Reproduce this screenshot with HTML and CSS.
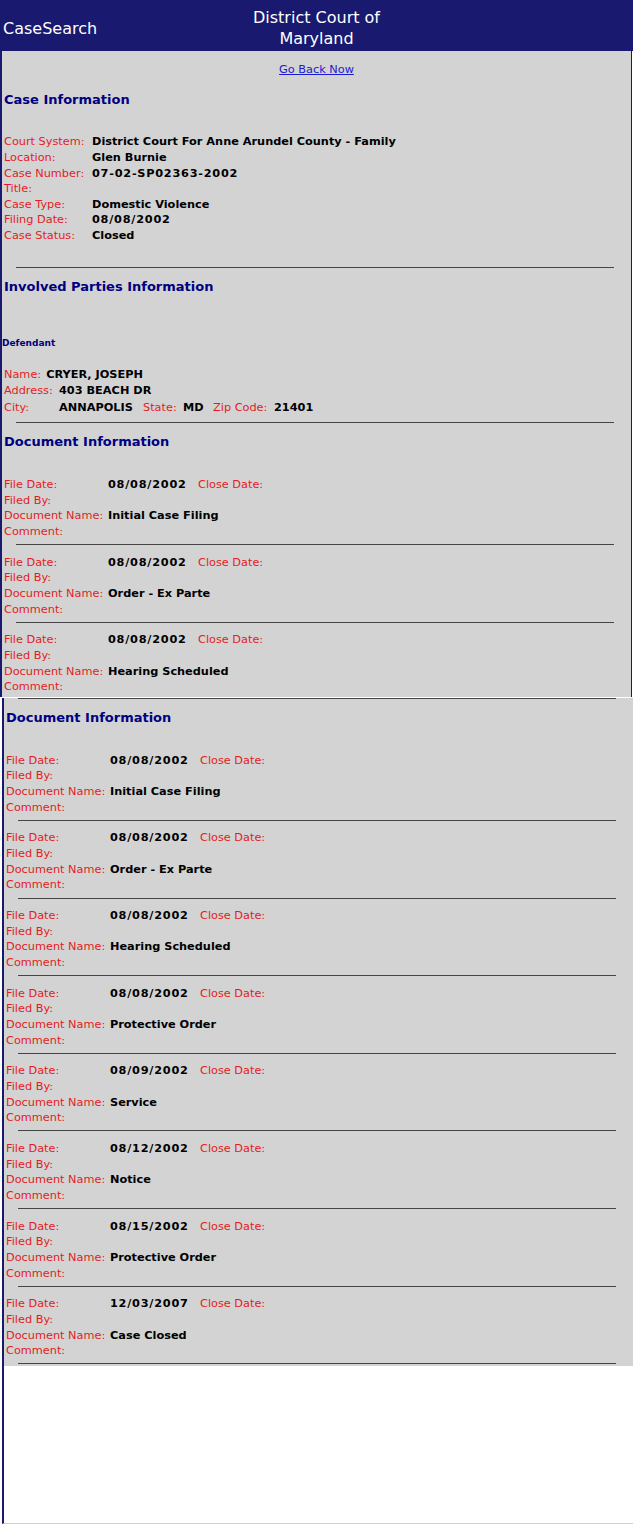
FILE: index.html
```html
<!DOCTYPE html>
<html lang="en">
<head>
<meta charset="utf-8">
<title>CaseSearch - District Court of Maryland</title>
<link rel="stylesheet" href="styles.css">
</head>
<body>
<header class="topbar">
  <div class="brand">CaseSearch</div>
  <div class="court">District Court of<br>Maryland</div>
  <div></div>
</header>

<main class="panel-top">
  <div class="goback"><a href="#">Go Back Now</a></div>

  <h2 class="section-title">Case Information</h2>
  <dl class="case-grid">
    <dt class="lbl">Court System:</dt><dd class="val">District Court For Anne Arundel County - Family</dd>
    <dt class="lbl">Location:</dt><dd class="val">Glen Burnie</dd>
    <dt class="lbl">Case Number:</dt><dd class="val num">07-02-SP02363-2002</dd>
    <dt class="lbl">Title:</dt><dd class="val"></dd>
    <dt class="lbl">Case Type:</dt><dd class="val">Domestic Violence</dd>
    <dt class="lbl">Filing Date:</dt><dd class="val num">08/08/2002</dd>
    <dt class="lbl">Case Status:</dt><dd class="val">Closed</dd>
  </dl>
  <hr class="rule rule-case">

  <h2 class="section-title title-parties">Involved Parties Information</h2>
  <div class="party-role">Defendant</div>
  <div class="party">
    <div class="party-name"><span class="lbl">Name:</span><span class="val">CRYER, JOSEPH</span></div>
    <div class="party-grid">
      <span class="lbl">Address:</span><span class="val">403 BEACH DR</span>
      <span class="lbl">City:</span>
      <div class="city-row">
        <span class="val">ANNAPOLIS</span>
        <span class="lbl">State:</span>
        <span class="val">MD</span>
        <span class="lbl">Zip Code:</span>
        <span class="val">21401</span>
      </div>
    </div>
  </div>
  <hr class="rule rule-party">

  <h2 class="section-title title-docs">Document Information</h2>
  <div class="docs">
    <div class="doc">
      <span class="lbl">File Date:</span><span class="val num">08/08/2002</span><span class="lbl">Close Date:</span>
      <span class="lbl">Filed By:</span><span class="val wide"></span>
      <span class="lbl">Document Name:</span><span class="val wide">Initial Case Filing</span>
      <span class="lbl">Comment:</span><span class="val wide"></span>
    </div>
    <hr class="rule doc-rule">
    <div class="doc">
      <span class="lbl">File Date:</span><span class="val num">08/08/2002</span><span class="lbl">Close Date:</span>
      <span class="lbl">Filed By:</span><span class="val wide"></span>
      <span class="lbl">Document Name:</span><span class="val wide">Order - Ex Parte</span>
      <span class="lbl">Comment:</span><span class="val wide"></span>
    </div>
    <hr class="rule doc-rule">
    <div class="doc">
      <span class="lbl">File Date:</span><span class="val num">08/08/2002</span><span class="lbl">Close Date:</span>
      <span class="lbl">Filed By:</span><span class="val wide"></span>
      <span class="lbl">Document Name:</span><span class="val wide">Hearing Scheduled</span>
      <span class="lbl">Comment:</span><span class="val wide"></span>
    </div>
  </div>
</main>

<section class="panel-bottom">
  <div class="panel-gray">
    <hr class="rule">
    <h2 class="section-title title-docs">Document Information</h2>
    <div class="docs">
      <div class="doc">
        <span class="lbl">File Date:</span><span class="val num">08/08/2002</span><span class="lbl">Close Date:</span>
        <span class="lbl">Filed By:</span><span class="val wide"></span>
        <span class="lbl">Document Name:</span><span class="val wide">Initial Case Filing</span>
        <span class="lbl">Comment:</span><span class="val wide"></span>
      </div>
      <hr class="rule doc-rule">
      <div class="doc">
        <span class="lbl">File Date:</span><span class="val num">08/08/2002</span><span class="lbl">Close Date:</span>
        <span class="lbl">Filed By:</span><span class="val wide"></span>
        <span class="lbl">Document Name:</span><span class="val wide">Order - Ex Parte</span>
        <span class="lbl">Comment:</span><span class="val wide"></span>
      </div>
      <hr class="rule doc-rule">
      <div class="doc">
        <span class="lbl">File Date:</span><span class="val num">08/08/2002</span><span class="lbl">Close Date:</span>
        <span class="lbl">Filed By:</span><span class="val wide"></span>
        <span class="lbl">Document Name:</span><span class="val wide">Hearing Scheduled</span>
        <span class="lbl">Comment:</span><span class="val wide"></span>
      </div>
      <hr class="rule doc-rule">
      <div class="doc">
        <span class="lbl">File Date:</span><span class="val num">08/08/2002</span><span class="lbl">Close Date:</span>
        <span class="lbl">Filed By:</span><span class="val wide"></span>
        <span class="lbl">Document Name:</span><span class="val wide">Protective Order</span>
        <span class="lbl">Comment:</span><span class="val wide"></span>
      </div>
      <hr class="rule doc-rule">
      <div class="doc">
        <span class="lbl">File Date:</span><span class="val num">08/09/2002</span><span class="lbl">Close Date:</span>
        <span class="lbl">Filed By:</span><span class="val wide"></span>
        <span class="lbl">Document Name:</span><span class="val wide">Service</span>
        <span class="lbl">Comment:</span><span class="val wide"></span>
      </div>
      <hr class="rule doc-rule">
      <div class="doc">
        <span class="lbl">File Date:</span><span class="val num">08/12/2002</span><span class="lbl">Close Date:</span>
        <span class="lbl">Filed By:</span><span class="val wide"></span>
        <span class="lbl">Document Name:</span><span class="val wide">Notice</span>
        <span class="lbl">Comment:</span><span class="val wide"></span>
      </div>
      <hr class="rule doc-rule">
      <div class="doc">
        <span class="lbl">File Date:</span><span class="val num">08/15/2002</span><span class="lbl">Close Date:</span>
        <span class="lbl">Filed By:</span><span class="val wide"></span>
        <span class="lbl">Document Name:</span><span class="val wide">Protective Order</span>
        <span class="lbl">Comment:</span><span class="val wide"></span>
      </div>
      <hr class="rule doc-rule">
      <div class="doc">
        <span class="lbl">File Date:</span><span class="val num">12/03/2007</span><span class="lbl">Close Date:</span>
        <span class="lbl">Filed By:</span><span class="val wide"></span>
        <span class="lbl">Document Name:</span><span class="val wide">Case Closed</span>
        <span class="lbl">Comment:</span><span class="val wide"></span>
      </div>
      <hr class="rule doc-rule">
    </div>
  </div>
</section>
</body>
</html>
```

FILE: styles.css
```css
* {
  box-sizing: border-box;
}

body {
  margin: 0;
  background: #ffffff;
  font-family: "DejaVu Sans", Verdana, sans-serif;
  font-size: 11.3px;
  color: #000000;
}

/* ---------- header ---------- */
.topbar {
  display: grid;
  grid-template-columns: 1fr auto 1fr;
  align-items: center;
  height: 51px;
  padding: 8px 0 3px;
  background: #191970;
  color: #ffffff;
}

.brand {
  padding-left: 3px;
  font-size: 16px;
  line-height: 20px;
}

.court {
  font-size: 16px;
  line-height: 20.5px;
  text-align: center;
}

/* ---------- shared ---------- */
.lbl {
  color: #e31c23;
  font-weight: normal;
}

.val {
  font-weight: bold;
}

.num {
  letter-spacing: 0.75px;
}

.section-title {
  margin: 15px 0 0;
  padding-left: 2px;
  font-size: 13px;
  line-height: 16px;
  font-weight: bold;
  color: #000080;
}

.rule {
  height: 0;
  margin: 0 17px 0 14px;
  border: 0;
  border-top: 1px solid #454545;
}

/* ---------- top panel ---------- */
.panel-top {
  display: block;
  width: 632px;
  padding: 12px 0 1.7px;
  background: #d3d3d3;
  border-left: 2px solid #191970;
  border-right: 1px solid #191970;
}

.goback {
  text-align: center;
  line-height: 14px;
}

.goback a {
  color: #1a1ad0;
}

.case-grid {
  display: grid;
  grid-template-columns: 88px 1fr;
  grid-auto-rows: 15.67px;
  line-height: 15.67px;
  margin: 26.2px 0 0;
  padding-left: 2px;
}

.case-grid dt,
.case-grid dd {
  margin: 0;
  white-space: nowrap;
}

.rule-case {
  margin-top: 23px;
}

.title-parties {
  margin-top: 11px;
}

.party-role {
  margin-top: 43.5px;
  font-size: 9px;
  line-height: 11px;
  font-weight: bold;
  color: #000080;
}

.party {
  margin-top: 17.5px;
  padding-left: 2px;
  line-height: 16.5px;
}

.party-name {
  display: flex;
  gap: 5px;
}

.party-grid {
  display: grid;
  grid-template-columns: 55px 1fr;
}

.city-row {
  display: grid;
  grid-template-columns: 84px 40px 30px 61px auto;
  white-space: nowrap;
}

.rule-party {
  margin-top: 5.6px;
}

.title-docs {
  margin-top: 11px;
}

.docs {
  margin-top: 27.2px;
}

.doc {
  display: grid;
  grid-template-columns: 104px 90px 1fr;
  grid-auto-rows: 15.67px;
  line-height: 15.67px;
  padding-left: 2px;
  white-space: nowrap;
}

.doc .wide {
  grid-column: 2 / -1;
}

.doc-rule {
  margin-top: 4.5px;
  margin-bottom: 9.5px;
}

/* ---------- bottom panel ---------- */
.panel-bottom {
  margin: 1px 0 0 2px;
  min-height: 826px;
  border-left: 2px solid #191970;
  border-bottom: 1px solid #cfcfcf;
}

.panel-gray {
  padding-bottom: 2px;
  background: #d3d3d3;
}

.panel-gray .docs .doc-rule:last-child {
  margin-bottom: 0;
}
```
